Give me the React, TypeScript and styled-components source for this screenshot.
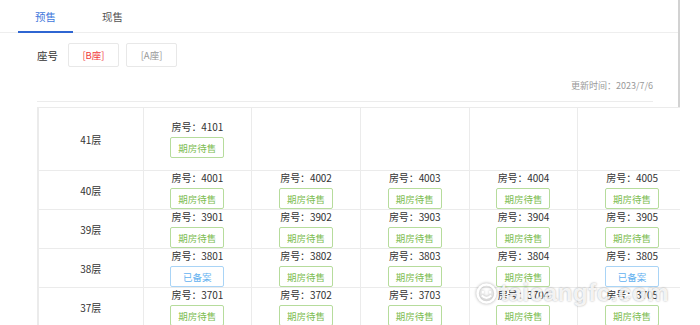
import React, { useState } from "react"
import styled, { createGlobalStyle, css } from "styled-components"

const GlobalStyle = createGlobalStyle`
  body {
    margin: 0;
    background: #fff;
    font-family: "Noto Sans CJK SC", "Noto Sans", sans-serif;
    color: #333;
  }
`

type Status = "presale" | "filed"

interface Room {
  no: string
  status: Status
}

interface Floor {
  name: string
  rooms: Room[]
  tall?: boolean
}

const floors: Floor[] = [
  { name: "41层", rooms: [{ no: "4101", status: "presale" }], tall: true },
  {
    name: "40层",
    rooms: ["4001", "4002", "4003", "4004", "4005"].map(no => ({ no, status: "presale" as Status })),
  },
  {
    name: "39层",
    rooms: ["3901", "3902", "3903", "3904", "3905"].map(no => ({ no, status: "presale" as Status })),
  },
  {
    name: "38层",
    rooms: [
      { no: "3801", status: "filed" },
      { no: "3802", status: "presale" },
      { no: "3803", status: "presale" },
      { no: "3804", status: "presale" },
      { no: "3805", status: "filed" },
    ],
  },
  {
    name: "37层",
    rooms: ["3701", "3702", "3703", "3704", "3705"].map(no => ({ no, status: "presale" as Status })),
  },
]

const Page = styled.div`
  position: relative;
  width: 680px;
  height: 325px;
  overflow: hidden;
`

const Header = styled.div`
  height: 107px;
  border-right: 2px solid #d2d2d2;
  box-sizing: border-box;
`

const Tabs = styled.div`
  display: flex;
  gap: 12px;
  height: 33px;
  padding-left: 18px;
  border-bottom: 1px solid #eeeeee;
  box-sizing: border-box;
`

const Tab = styled.div<{ $active?: boolean }>`
  width: 55px;
  height: 33px;
  box-sizing: border-box;
  display: flex;
  align-items: center;
  justify-content: center;
  font-size: 10.5px;
  color: #555;
  cursor: pointer;
  ${({ $active }) =>
    $active &&
    css`
      color: #3f78dc;
      border-bottom: 2px solid #2f66d2;
      padding-top: 2px;
    `}
`

const Body = styled.div`
  padding: 0 25px 0 37px;
`

const SeatRow = styled.div`
  display: flex;
  align-items: center;
  margin-top: 10px;
  height: 24px;
`

const SeatLabel = styled.span`
  font-size: 10.5px;
  color: #333;
  width: 31px;
`

const SeatButtons = styled.div`
  display: flex;
  gap: 7px;
`

const SeatButton = styled.button<{ $active?: boolean }>`
  width: 51px;
  height: 24px;
  border: 1px solid #e8e8e8;
  border-radius: 2px;
  background: #fff;
  font-family: inherit;
  font-size: 9.5px;
  color: ${({ $active }) => ($active ? "#f03a3a" : "#9a9a9a")};
  padding: 0;
  cursor: pointer;
`

const Updated = styled.div`
  margin-top: 12px;
  line-height: 14px;
  text-align: right;
  font-size: 9px;
  color: #999;
  padding-bottom: 8px;
  border-bottom: 1px solid #ececec;
`

const TableWrap = styled.div`
  margin-left: 37px;
  width: 643px;
  overflow: hidden;
`

const Table = styled.table`
  width: 650px;
  table-layout: fixed;
  border-collapse: collapse;
  font-size: 10px;
  color: #333;
`

const FloorCell = styled.td`
  text-align: center;
  border: 1px solid #ebebeb;
  border-left-width: 2px;
  padding: 0;
`

const RoomCell = styled.td`
  border: 1px solid #ebebeb;
  padding: 0;
  vertical-align: middle;
`

const Row = styled.tr<{ $tall?: boolean }>`
  height: ${({ $tall }) => ($tall ? "63px" : "38px")};
`

const RoomBox = styled.div`
  display: flex;
  flex-direction: column;
  align-items: center;
`

const RoomNo = styled.div`
  line-height: 14px;
  height: 14px;
  margin-bottom: 3px;
  letter-spacing: -0.1px;
`

const StatusTag = styled.div<{ $status: Status }>`
  width: 54px;
  height: 21px;
  box-sizing: border-box;
  border-radius: 2px;
  display: flex;
  align-items: center;
  justify-content: center;
  font-size: 9.5px;
  ${({ $status }) =>
    $status === "filed"
      ? css`
          border: 1px solid #a9d4f6;
          color: #62b1f0;
        `
      : css`
          border: 1px solid #b6dc9c;
          color: #7dbd52;
        `}
`

const Watermark = styled.div`
  position: absolute;
  left: 476px;
  top: 279px;
  display: flex;
  align-items: center;
  gap: 3px;
  pointer-events: none;
  font-family: "Liberation Sans", Arial, sans-serif;
  font-size: 24px;
  font-weight: bold;
  letter-spacing: 0.6px;
  color: rgba(255, 255, 255, 0.85);
  text-shadow: 0 0 2px rgba(0, 0, 0, 0.35);
`

const Smiley = styled.svg`
  filter: drop-shadow(0 0 1.5px rgba(0, 0, 0, 0.35));
`

const statusText: Record<Status, string> = {
  presale: "期房待售",
  filed: "已备案",
}

const App = () => {
  const [tab, setTab] = useState(0)
  const [seat, setSeat] = useState("B")

  return (
    <Page>
      <GlobalStyle />
      <Header>
        <Tabs>
          <Tab $active={tab === 0} onClick={() => setTab(0)}>
            预售
          </Tab>
          <Tab $active={tab === 1} onClick={() => setTab(1)}>
            现售
          </Tab>
        </Tabs>
        <Body>
          <SeatRow>
            <SeatLabel>座号</SeatLabel>
            <SeatButtons>
              <SeatButton $active={seat === "B"} onClick={() => setSeat("B")}>
                [B座]
              </SeatButton>
              <SeatButton $active={seat === "A"} onClick={() => setSeat("A")}>
                [A座]
              </SeatButton>
            </SeatButtons>
          </SeatRow>
          <Updated>更新时间：2023/7/6</Updated>
        </Body>
      </Header>
      <TableWrap>
        <Table>
          <colgroup>
            <col style={{ width: 105 }} />
            <col />
            <col />
            <col />
            <col />
            <col />
          </colgroup>
          <tbody>
            {floors.map(floor => (
              <Row key={floor.name} $tall={floor.tall}>
                <FloorCell>{floor.name}</FloorCell>
                {[0, 1, 2, 3, 4].map(i => {
                  const room = floor.rooms[i]
                  return (
                    <RoomCell key={i}>
                      {room && (
                        <RoomBox>
                          <RoomNo>房号：{room.no}</RoomNo>
                          <StatusTag $status={room.status}>{statusText[room.status]}</StatusTag>
                        </RoomBox>
                      )}
                    </RoomCell>
                  )
                })}
              </Row>
            ))}
          </tbody>
        </Table>
      </TableWrap>
      <Watermark>
        <Smiley width="21" height="21" viewBox="0 0 20 20">
          <circle cx="10" cy="10" r="8.5" fill="none" stroke="#fff" strokeWidth="2.4" />
          <path d="M6.5 7.5 L6.5 10 M13.5 7.5 L13.5 10" stroke="#fff" strokeWidth="2" />
          <path d="M5.5 12 Q10 16.5 14.5 12" fill="none" stroke="#fff" strokeWidth="2" />
        </Smiley>
        <span>taicangfc.com</span>
      </Watermark>
    </Page>
  )
}

export default App
